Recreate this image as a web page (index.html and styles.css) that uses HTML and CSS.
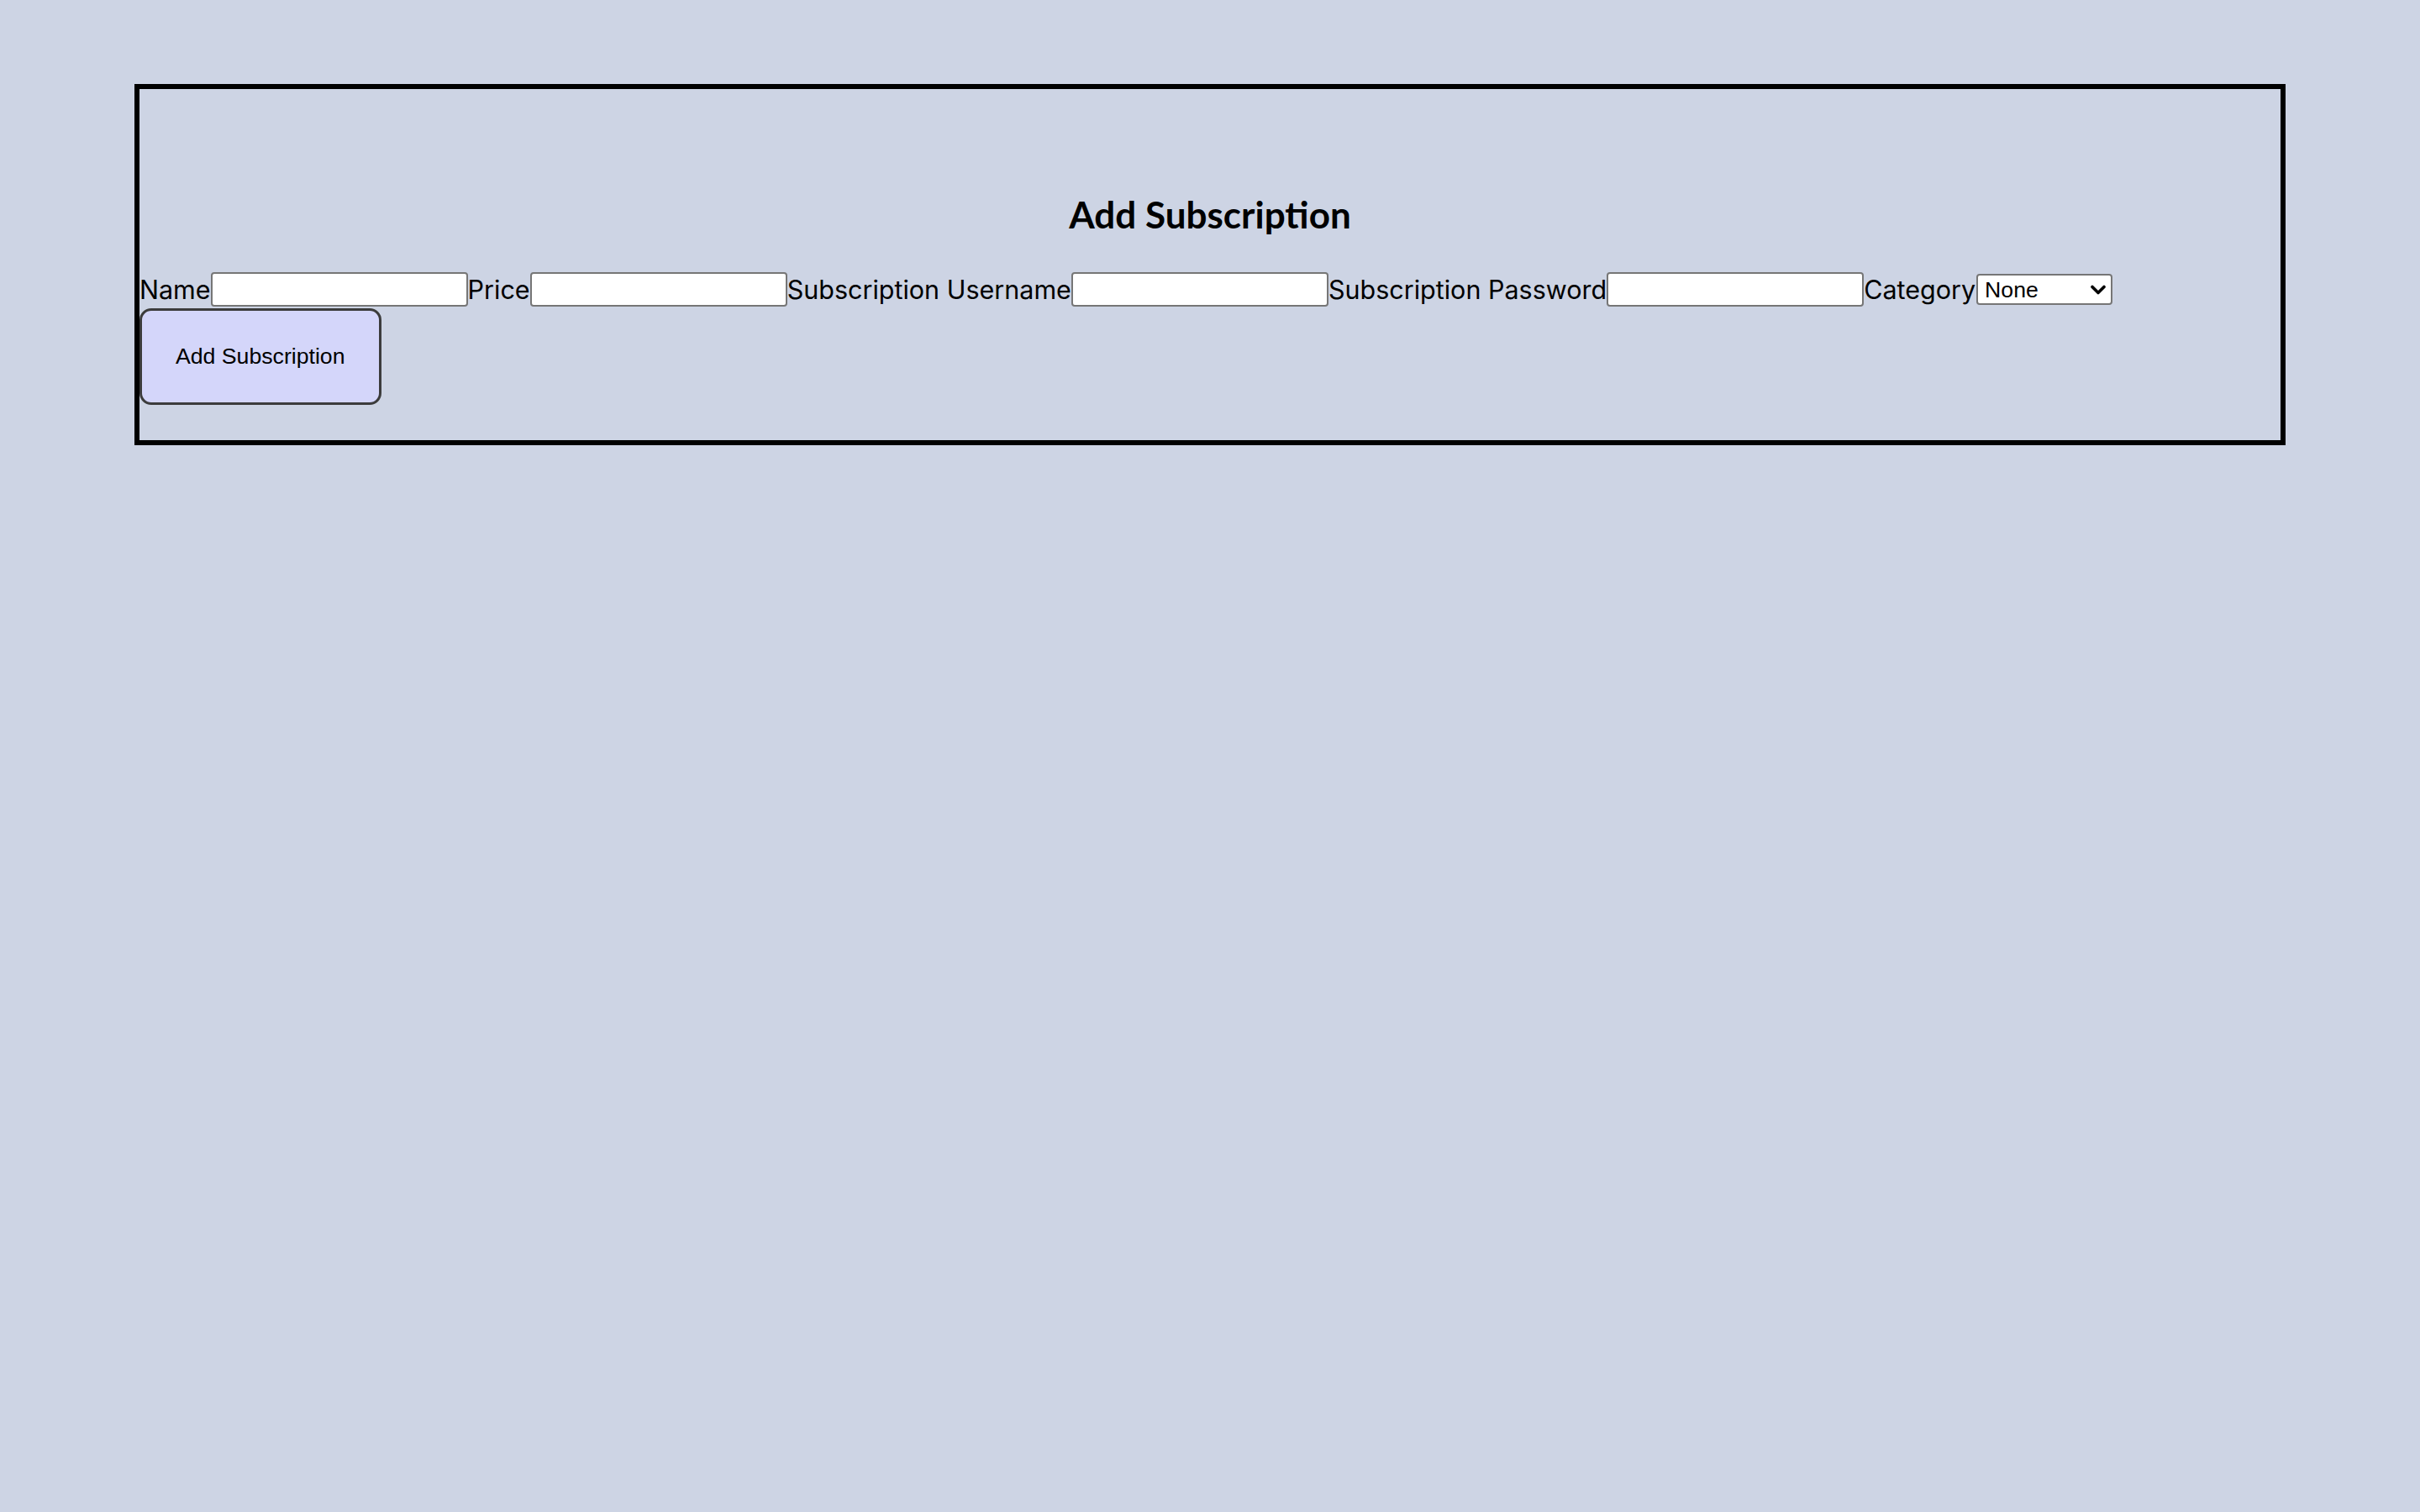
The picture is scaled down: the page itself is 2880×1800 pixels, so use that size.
FILE: index.html
```html
<!DOCTYPE html>
<html lang="en">
<head>
	<meta charset="UTF-8">
	<title>Subscriptions</title>
	<link rel="stylesheet" href="styles.css">
</head>
<body>
	<!-- add subscription panel -->
	<div class="add_box">
		<h2 class="add_title">Add Subscription</h2>
		<form class="add_form">
			<label class="field">Name<input type="text" name="name"></label>
			<label class="field">Price<input type="text" name="price"></label>
			<label class="field">Subscription Username<input type="text" name="username"></label>
			<label class="field">Subscription Password<input type="text" name="password"></label>
			<label class="field">Category<span class="select_wrap">
				<select name="category">
					<option>None</option>
					<option>Streaming</option>
					<option>Music</option>
					<option>Software</option>
				</select>
				<svg class="chevron" width="18" height="12" viewBox="0 0 18 12"><path d="M2 2.5 L9 9.5 L16 2.5" fill="none" stroke="#000" stroke-width="3.6" stroke-linecap="round" stroke-linejoin="round"/></svg>
			</span></label>
			<button type="submit" class="add_btn">Add Subscription</button>
		</form>
	</div>
</body>
</html>
```

FILE: styles.css
```css
	body{
		margin:0;
		background:#cdd4e4;
		font-family:Inter, "Noto Sans", sans-serif;
		color:#000;
	}
	.add_box{
		margin:100px 160px 0;
		border:6px solid #000;
		padding:0 0 42px;
	}
	.add_title{
		margin:0 0 39px;
		padding-top:119px;
		font-family:"Comic Sans MS", Lato, sans-serif;
		font-weight:bold;
		font-size:44px;
		line-height:60px;
		text-align:center;
	}
	.add_form{
		display:flex;
		flex-wrap:wrap;
		align-items:center;
		row-gap:2px;
	}
	.field{
		display:flex;
		align-items:center;
		font-size:30.5px;
	}
	.field input{
		box-sizing:border-box;
		width:306px;
		height:41px;
		margin:0;
		padding:2px 4px;
		border:2px solid #767676;
		border-radius:4px;
		background:#fff;
		font-size:26px;
	}
	.select_wrap{
		position:relative;
		display:flex;
		margin-left:1px;
	}
	.select_wrap select{
		-webkit-appearance:none;
		appearance:none;
		box-sizing:border-box;
		width:162px;
		height:37px;
		margin:0;
		padding:0 8px;
		border:2px solid #767676;
		border-radius:4px;
		background:#fff;
		font-family:"Liberation Sans", Arial, sans-serif;
		font-size:26.67px;
		color:#000;
	}
	.chevron{
		position:absolute;
		right:8px;
		top:13px;
		pointer-events:none;
	}
	.add_btn{
		margin:0;
		padding:39px 40px;
		border:3px solid #3c3c3c;
		border-radius:14px;
		background:#d4d6fa;
		font-family:"Liberation Sans", Arial, sans-serif;
		font-size:26.67px;
		color:#000;
	}
```
